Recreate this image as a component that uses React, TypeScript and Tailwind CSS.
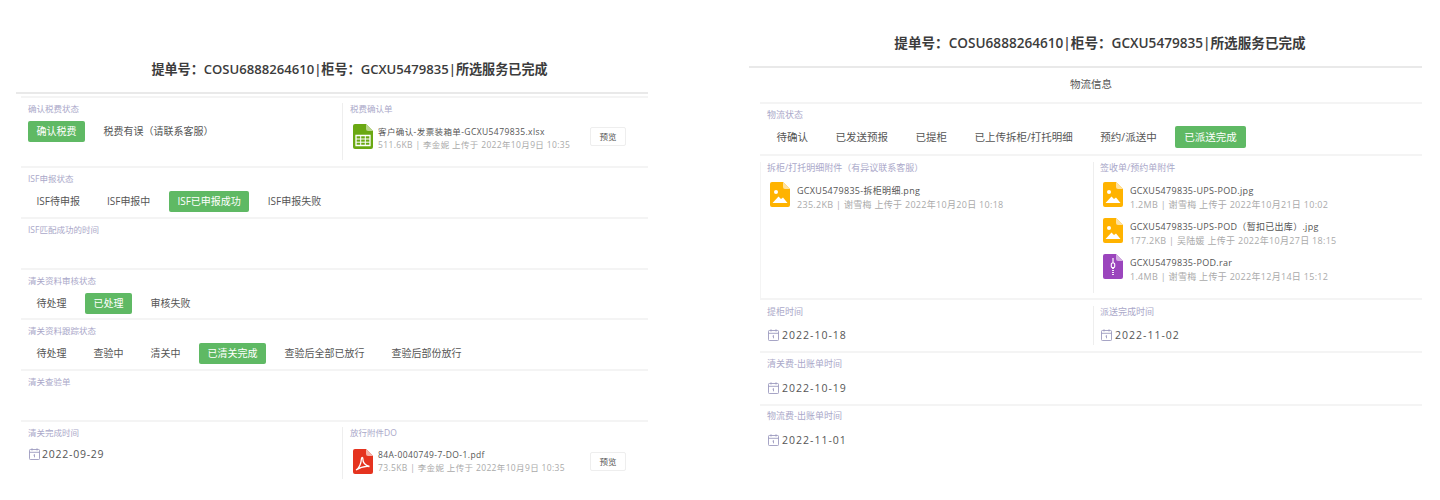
const font = '[font-family:"Open_Sans","Noto_Sans_CJK_SC",sans-serif]'

const FileShape = ({ color, fold, children }: { color: string; fold: string; children?: React.ReactNode }) => (
  <svg width="20" height="25" viewBox="0 0 20 25" className="shrink-0">
    <path d="M2 0h11l7 7v16a2 2 0 0 1-2 2H2a2 2 0 0 1-2-2V2a2 2 0 0 1 2-2z" fill={color} />
    <path d="M13 0l7 7h-5a2 2 0 0 1-2-2z" fill={fold} />
    {children}
  </svg>
)

const ExcelIcon = () => (
  <FileShape color="#6aa812" fold="#b9d68a">
    <path d="M3 11.500h14v10H3z" fill="none" stroke="#fff" strokeWidth="1.300" />
    <path d="M3 15h14M3 18.200h14M7.700 11.500v10M12.300 11.500v10" stroke="#fff" strokeWidth="1" />
  </FileShape>
)

const PdfIcon = () => (
  <FileShape color="#e5331f" fold="#f4b3aa">
    <path
      d="M3 21c2.500-1.500 5-6 5.500-11.500 .2-1.600 1.300-1.600 1.300 0 0 4 2.500 7 6.700 8-4-.5-9 .5-13.500 3.500z"
      fill="none"
      stroke="#fff"
      strokeWidth="1.300"
    />
  </FileShape>
)

const ImageIcon = () => (
  <FileShape color="#ffb300" fold="#ffe2a0">
    <circle cx="6" cy="10" r="2" fill="#fff" />
    <path d="M2.500 21l6-6.500 2.500 2.500 2-1.500 4.500 5.500z" fill="#fff" />
  </FileShape>
)

const RarIcon = () => (
  <FileShape color="#9b45bd" fold="#d3aee2">
    <path d="M10 4v5" stroke="#fff" strokeWidth="1.200" />
    <rect x="8.300" y="9" width="3.400" height="4.500" rx="1" fill="none" stroke="#fff" strokeWidth="1.100" />
    <path d="M10 14v7" stroke="#fff" strokeWidth="1.800" strokeDasharray="1 1" />
  </FileShape>
)

const CalendarIcon = () => (
  <svg width="11" height="12" viewBox="0 0 11 12" fill="none" stroke="#9d9bc0" strokeWidth="0.900" className="shrink-0">
    <rect x="0.500" y="1.500" width="10" height="10" rx="0.800" />
    <path d="M0.500 4.300h10M3 0.300v2.200M8 0.300v2.200M5.500 6.500v2.800M4.500 7.200l1-.7" />
  </svg>
)

const Label = ({ text, large }: { text: string; large?: boolean }) => (
  <div
    className={`h-[11px] leading-[11px] text-[#aaa8c9] whitespace-nowrap ${large ? 'text-[9px]' : 'text-[8.5px]'}`}
  >
    {text}
  </div>
)

const Steps = ({
  items,
  active,
  className,
  large,
}: {
  items: string[]
  active: string
  className: string
  large?: boolean
}) => (
  <div className={`flex ${large ? 'gap-[8.5px]' : 'gap-[10px]'} ${className}`}>
    {items.map((item) => (
      <div
        key={item}
        className={`whitespace-nowrap ${
          large ? 'h-[22px] px-[9.5px] text-[10.5px] leading-[22px]' : 'h-[21px] px-[8.5px] text-[10px] leading-[21px]'
        } ${item === active ? 'rounded-[2px] bg-[#5fb964] text-white' : 'text-[#555]'}`}
      >
        {item}
      </div>
    ))}
  </div>
)

const FileItem = ({
  icon,
  name,
  meta,
  preview,
  large,
  nudge,
}: {
  icon: React.ReactNode
  name: string
  meta: string
  preview?: boolean
  large?: boolean
  nudge?: boolean
}) => (
  <div className="flex items-center pl-[3px]">
    {icon}
    <div className={`min-w-0 ${large ? 'ml-[7px] mt-[7px]' : 'ml-[5px]'} ${nudge ? 'mt-[3px]' : ''}`}>
      <div
        className={`whitespace-nowrap text-[#555] ${
          large ? 'text-[9px] leading-[14px] tracking-[0.3px]' : 'text-[8.5px] leading-[13px] tracking-[0.4px]'
        }`}
      >
        {name}
      </div>
      <div
        className={`whitespace-nowrap text-[#aaa] ${
          large ? 'text-[9px] leading-[14px] tracking-[0.3px]' : 'text-[8.5px] leading-[13px] tracking-[0.35px]'
        }`}
      >
        {meta}
      </div>
    </div>
    {preview && (
      <div className="ml-auto mr-[22px] h-[19px] w-[36px] rounded-[2px] border border-[#eee] text-center text-[8.5px] leading-[17px] text-[#555]">
        预览
      </div>
    )}
  </div>
)

const DateValue = ({ text, className, large }: { text: string; className: string; large?: boolean }) => (
  <div className={`flex items-center ${large ? 'gap-[3px] pl-[1px]' : 'gap-[2px]'} ${className}`}>
    <CalendarIcon />
    <span
      className={`leading-[14px] text-[#555] ${
        large ? 'text-[10.5px] tracking-[1px]' : 'text-[10.5px] tracking-[0.75px]'
      }`}
    >
      {text}
    </span>
  </div>
)

const Row = ({ height, children }: { height: string; children: React.ReactNode }) => (
  <div className={`${height} border-b-2 border-[#f4f4f4] pl-[7px] pt-[5px]`}>{children}</div>
)

const Cell = ({ width, children }: { width: string; children: React.ReactNode }) => (
  <div className={`${width} shrink-0 pl-[7px]`}>{children}</div>
)

const Title = ({ className }: { className: string }) => (
  <div
    className={`flex items-end justify-center border-b-2 border-[#e9e9e9] font-semibold leading-[20px] text-[#3c3c3c] ${className}`}
  >
    {'提单号\uFF1ACOSU6888264610|柜号\uFF1AGCXU5479835|所选服务已完成'}
  </div>
)

export default function App() {
  return (
    <div className={`flex h-[500px] w-[1440px] items-start overflow-hidden bg-white ${font}`}>
      {/* 税费 / ISF / 清关 */}
      <div className="ml-[16px] w-[632px] shrink-0">
        <Title className="h-[94px] pb-[13px] pl-[35px] text-[13.1px]" />
        <div className="ml-[5px] mt-[2px] border-t-2 border-[#f4f4f4]">
          <div className="flex h-[70px] border-b-2 border-[#f4f4f4] pt-[5px]">
            <Cell width="w-[321px]">
              <Label text="确认税费状态" />
              <Steps
                className="mt-[7px]"
                items={['确认税费', '税费有误\uFF08请联系客服\uFF09']}
                active="确认税费"
              />
            </Cell>
            <div className="mb-[6px] flex-1 border-l border-[#eee] pl-[7px]">
              <Label text="税费确认单" />
              <div className="mt-[8px]">
                <FileItem
                  nudge
                  icon={<ExcelIcon />}
                  name="客户确认-发票装箱单-GCXU5479835.xlsx"
                  meta="511.6KB | 李金妮 上传于 2022年10月9日 10:35"
                  preview
                />
              </div>
            </div>
          </div>
          <Row height="h-[51px]">
            <Label text="ISF申报状态" />
            <Steps
              className="mt-[7px]"
              items={['ISF待申报', 'ISF申报中', 'ISF已申报成功', 'ISF申报失败']}
              active="ISF已申报成功"
            />
          </Row>
          <Row height="h-[51px]">
            <Label text="ISF匹配成功的时间" />
          </Row>
          <Row height="h-[50px]">
            <Label text="清关资料审核状态" />
            <Steps className="mt-[7px]" items={['待处理', '已处理', '审核失败']} active="已处理" />
          </Row>
          <Row height="h-[51px]">
            <Label text="清关资料跟踪状态" />
            <Steps
              className="mt-[7px]"
              items={['待处理', '查验中', '清关中', '已清关完成', '查验后全部已放行', '查验后部份放行']}
              active="已清关完成"
            />
          </Row>
          <Row height="h-[51px]">
            <Label text="清关查验单" />
          </Row>
          <div className="flex h-[57px] pt-[5px]">
            <Cell width="w-[321px]">
              <Label text="清关完成时间" />
              <DateValue className="mt-[9px] pl-[1px]" text="2022-09-29" />
            </Cell>
            <div className="flex-1 border-l border-[#eee] pl-[7px]">
              <Label text="放行附件DO" />
              <div className="mt-[10px]">
                <FileItem
                  icon={<PdfIcon />}
                  name="84A-0040749-7-DO-1.pdf"
                  meta="73.5KB | 李金妮 上传于 2022年10月9日 10:35"
                  preview
                />
              </div>
            </div>
          </div>
        </div>
      </div>

      {/* 物流信息 */}
      <div className="ml-[101px] w-[673px] shrink-0">
        <Title className="h-[68px] pb-[13px] pl-[29px] text-[13.6px]" />
        <div className="ml-[11px]">
          <div className="h-[36px] border-b-2 border-[#f4f4f4] text-center text-[10.5px] leading-[33px] text-[#555]">
            物流信息
          </div>
          <Row height="h-[52px]">
            <Label large text="物流状态" />
            <Steps
              large
              className="mt-[6px]"
              items={['待确认', '已发送预报', '已提柜', '已上传拆柜/打托明细', '预约/派送中', '已派送完成']}
              active="已派送完成"
            />
          </Row>
          <div className="flex h-[144px] border-b-2 border-[#f4f4f4] pt-[6px]">
            <div className="w-[333px] shrink-0 border-l border-[#f4f4f4] pl-[6px]">
              <Label large text={'拆柜/打托明细附件\uFF08有异议联系客服\uFF09'} />
              <div className="mt-[4px]">
                <FileItem
                  large
                  icon={<ImageIcon />}
                  name="GCXU5479835-拆柜明细.png"
                  meta="235.2KB | 谢雪梅 上传于 2022年10月20日 10:18"
                />
              </div>
            </div>
            <div className="mb-[5px] flex-1 border-l border-[#eee] pl-[6px]">
              <Label large text="签收单/预约单附件" />
              <div className="mt-[4px] flex flex-col gap-[1px]">
                <FileItem
                  large
                  icon={<ImageIcon />}
                  name="GCXU5479835-UPS-POD.jpg"
                  meta="1.2MB | 谢雪梅 上传于 2022年10月21日 10:02"
                />
                <FileItem
                  large
                  icon={<ImageIcon />}
                  name={'GCXU5479835-UPS-POD\uFF08暂扣已出库\uFF09.jpg'}
                  meta="177.2KB | 吴陆媛 上传于 2022年10月27日 18:15"
                />
                <FileItem
                  large
                  icon={<RarIcon />}
                  name="GCXU5479835-POD.rar"
                  meta="1.4MB | 谢雪梅 上传于 2022年12月14日 15:12"
                />
              </div>
            </div>
          </div>
          <div className="flex h-[53px] border-b-2 border-[#f4f4f4] pt-[6px]">
            <Cell width="w-[333px]">
              <Label large text="提柜时间" />
              <DateValue large className="mt-[11px]" text="2022-10-18" />
            </Cell>
            <div className="mb-[6px] flex-1 border-l border-[#eee] pl-[6px]">
              <Label large text="派送完成时间" />
              <DateValue large className="mt-[11px]" text="2022-11-02" />
            </div>
          </div>
          <Row height="h-[53px]">
            <Label large text="清关费-出账单时间" />
            <DateValue large className="mt-[12px]" text="2022-10-19" />
          </Row>
          <div className="h-[50px] pl-[7px] pt-[4px]">
            <Label large text="物流费-出账单时间" />
            <DateValue large className="mt-[12px]" text="2022-11-01" />
          </div>
        </div>
      </div>
    </div>
  )
}
